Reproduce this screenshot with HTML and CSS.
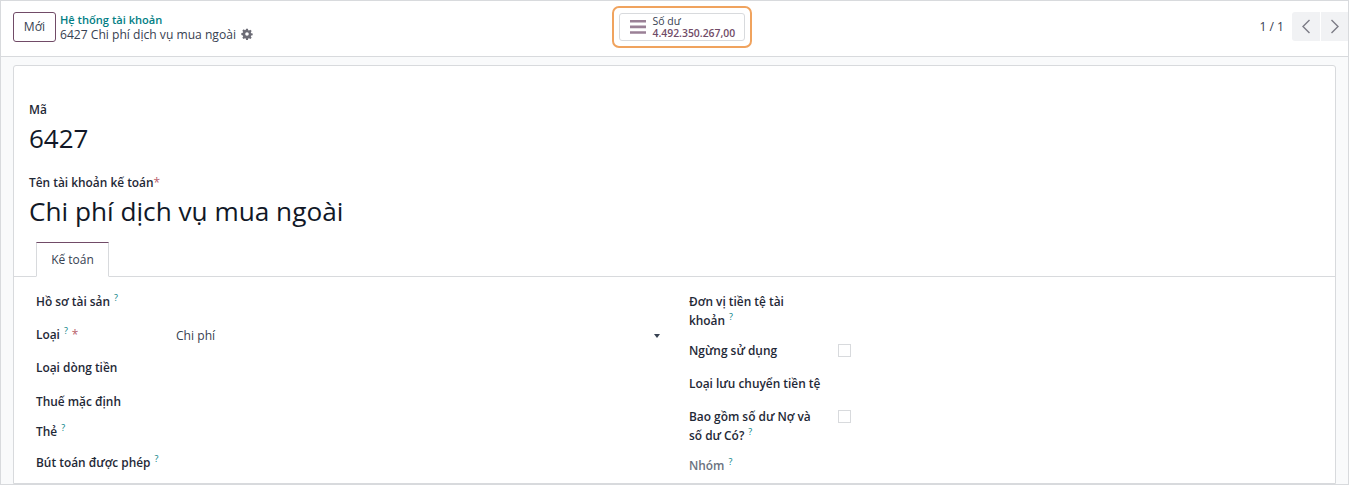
FILE: index.html
```html
<!DOCTYPE html>
<html lang="vi">
<head>
  <meta charset="UTF-8">
  <title>6427 Chi phí dịch vụ mua ngoài</title>
  <link rel="stylesheet" href="styles.css">
</head>
<body>
  <div class="app">
    <!-- control panel -->
    <div class="panel">
      <div class="panel-left">
        <button class="btn-new">Mới</button>
        <div class="crumbs">
          <a class="crumb-link">Hệ thống tài khoản</a>
          <div class="crumb-current">6427 Chi phí dịch vụ mua ngoài
            <svg class="gear" width="12" height="12" viewBox="-1 -1 18 18"><path fill="#6c6c76" fill-rule="evenodd" d="M6.6 0h2.8l.4 2.2 1.3.6 1.9-1.3 2 2-1.3 1.9.6 1.3 2.2.4v2.8l-2.2.4-.6 1.3 1.3 1.9-2 2-1.9-1.3-1.3.6-.4 2.2H6.6l-.4-2.2-1.3-.6-1.9 1.3-2-2 1.3-1.9-.6-1.3L-.5 9.4V6.6l2.2-.4.6-1.3-1.3-1.9 2-2 1.9 1.3 1.3-.6zM8 5.3a2.7 2.7 0 1 0 0 5.4 2.7 2.7 0 0 0 0-5.4z"/></svg>
          </div>
        </div>
      </div>
      <div class="panel-mid">
        <div class="highlight">
          <button class="stat">
            <svg width="16" height="14" viewBox="0 0 16 14"><path fill="#9a8096" d="M0 0h16v2.6H0zM0 5.6h16v2.6H0zM0 11.2h16v2.6H0z"/></svg>
            <span class="stat-text">
              <span class="stat-label">Số dư</span>
              <span class="stat-value">4.492.350.267,00</span>
            </span>
          </button>
        </div>
      </div>
      <div class="panel-right">
        <span class="pager">1 / 1</span>
        <div class="pager-btns">
          <button class="pager-btn prev"><svg width="10" height="15" viewBox="0 0 10 15"><path fill="none" stroke="#7c7c86" stroke-width="1.4" d="M8.5 1 2 7.5 8.5 14"/></svg></button>
          <button class="pager-btn next"><svg width="10" height="15" viewBox="0 0 10 15"><path fill="none" stroke="#7c7c86" stroke-width="1.4" d="M1.5 1 8 7.5 1.5 14"/></svg></button>
        </div>
      </div>
    </div>

    <!-- form sheet -->
    <div class="content">
      <div class="sheet">
        <div class="title-block">
          <label class="title-label">Mã</label>
          <div class="code">6427</div>
          <label class="title-label name-label">Tên tài khoản kế toán<span class="req">*</span></label>
          <div class="name">Chi phí dịch vụ mua ngoài</div>
        </div>
        <div class="tabs"><span class="tab">Kế toán</span></div>
        <div class="groups">
          <div class="group-left">
            <div class="row r-33"><span class="lbl">Hồ sơ tài sản<sup>?</sup></span></div>
            <div class="row r-33"><span class="lbl">Loại<sup>?</sup><span class="star">*</span></span><span class="val">Chi phí</span><span class="caret"></span></div>
            <div class="row r-34"><span class="lbl">Loại dòng tiền</span></div>
            <div class="row r-30"><span class="lbl">Thuế mặc định</span></div>
            <div class="row r-31"><span class="lbl">Thẻ<sup>?</sup></span></div>
            <div class="row r-30"><span class="lbl">Bút toán được phép<sup>?</sup></span></div>
          </div>
          <div class="group-right">
            <div class="row r-49"><span class="lbl wrap">Đơn vị tiền tệ tài khoản<sup>?</sup></span></div>
            <div class="row r-33"><span class="lbl wrap">Ngừng sử dụng</span><span class="check"></span></div>
            <div class="row r-33"><span class="lbl">Loại lưu chuyển tiền tệ</span></div>
            <div class="row r-49"><span class="lbl wrap">Bao gồm số dư Nợ và số dư Có?<sup>?</sup></span><span class="check"></span></div>
            <div class="row r-30"><span class="lbl muted">Nhóm<sup>?</sup></span></div>
          </div>
        </div>
      </div>
    </div>
  </div>
</body>
</html>
```

FILE: styles.css
```css
* {
  box-sizing: border-box;
}

html, body {
  height: 100%;
}

body {
  margin: 0;
  font-family: 'Open Sans', 'Noto Sans', sans-serif;
  font-size: 12.1px;
  color: #374151;
  background: #fff;
  overflow: hidden;
}

button {
  font-family: inherit;
  cursor: pointer;
}

.app {
  height: 485px;
  border: 1px solid #d8dadd;
  display: flex;
  flex-direction: column;
  overflow: hidden;
}

.panel {
  height: 56px;
  flex: none;
  display: grid;
  grid-template-columns: 1fr auto 1fr;
  align-items: center;
  padding: 0 0 4px 12px;
  background: #fff;
  border-bottom: 1px solid #d8dadd;
}

.panel-left {
  display: flex;
  align-items: center;
  gap: 4px;
}

.btn-new {
  width: 43px;
  height: 30px;
  background: #fff;
  border: 1px solid #714b67;
  border-radius: 3px;
  color: #374151;
  font-size: 12.1px;
  padding: 0;
}

.crumbs {
  line-height: 15px;
}

.crumb-link {
  display: block;
  color: #017e84;
  font-weight: 600;
  font-size: 11.1px;
}

.crumb-current {
  color: #374151;
  display: flex;
  align-items: center;
  gap: 5px;
}

.panel-mid {
  display: flex;
  justify-content: center;
  margin-left: 2px;
}

.highlight {
  border: 2px solid #f0a35e;
  border-radius: 7px;
  padding: 5px;
}

.stat {
  width: 126px;
  height: 28px;
  display: flex;
  align-items: center;
  gap: 7px;
  padding: 0 0 0 10px;
  background: #fff;
  border: 1px solid #d8dadd;
  border-radius: 3px;
  color: #374151;
  text-align: left;
}

.stat-text {
  display: flex;
  flex-direction: column;
  line-height: 12px;
}

.stat-label {
  font-size: 10.5px;
}

.stat-value {
  font-size: 10.4px;
  font-weight: 600;
  color: #714b67;
}

.panel-right {
  display: flex;
  justify-content: flex-end;
  align-items: center;
  gap: 8px;
}

.pager-btns {
  display: flex;
  gap: 1px;
}

.pager-btn {
  height: 29px;
  padding: 0;
  border: none;
  background: #f1f2f4;
  display: flex;
  align-items: center;
  justify-content: center;
}

.pager-btn.prev {
  width: 28px;
  border-radius: 3px 0 0 3px;
}

.pager-btn.next {
  width: 27px;
}

.content {
  flex: 1;
  background: #f9fafb;
  padding: 8px 12px 0;
  min-height: 0;
}

.sheet {
  height: 100%;
  background: #fff;
  border: 1px solid #d8dadd;
  border-radius: 3px 3px 0 0;
}

.title-block {
  padding: 35px 15px 0;
}

.title-label {
  display: block;
  font-weight: 600;
  font-size: 11.9px;
  line-height: 17px;
  color: #1f2937;
}

.code {
  font-size: 26px;
  line-height: 36px;
  margin-top: 2px;
  color: #111827;
}

.name-label {
  margin-top: 18px;
}

.req {
  color: #b8606a;
  font-weight: 400;
}

.name {
  font-size: 26.2px;
  line-height: 36px;
  margin-top: 2px;
  color: #111827;
}

.tabs {
  margin-top: 13px;
  padding-left: 22px;
  height: 35px;
  border-bottom: 1px solid #d8dadd;
}

.tab {
  display: inline-block;
  width: 73px;
  height: 35px;
  line-height: 33px;
  text-align: center;
  background: #fff;
  border: 1px solid #d8dadd;
  border-top-color: #714b67;
  border-bottom-color: #fff;
  font-size: 12px;
}

.groups {
  display: grid;
  grid-template-columns: 675px 1fr;
  padding-top: 8px;
}

.group-left {
  padding-left: 22px;
  padding-right: 29px;
}

.row {
  display: flex;
  align-items: flex-start;
  line-height: 19px;
  padding-top: 7px;
}

.r-30 { height: 30px; }
.r-31 { height: 31px; }
.r-33 { height: 33px; }
.r-34 { height: 34px; }
.r-49 { height: 49px; }

.lbl {
  width: 140px;
  flex: none;
  font-weight: 600;
  color: #1f2937;
  font-size: 11.9px;
}

.group-right .lbl {
  width: 149px;
}

.group-right .lbl.wrap {
  width: 130px;
  margin-right: 19px;
}

.lbl.muted {
  color: #6b7280;
}

sup {
  color: #017e84;
  font-size: 9px;
  font-weight: 400;
  margin-left: 4px;
  line-height: 0;
}

.star {
  color: #b8606a;
  font-weight: 400;
  margin-left: 4px;
}

.val {
  flex: 1;
  margin-top: 1px;
}

.caret {
  width: 0;
  height: 0;
  margin-top: 9px;
  border-left: 3px solid transparent;
  border-right: 3px solid transparent;
  border-top: 4px solid #374151;
}

.check {
  width: 13px;
  height: 13px;
  margin-top: 3px;
  border: 1px solid #d8dadd;
  background: #fff;
}
```
